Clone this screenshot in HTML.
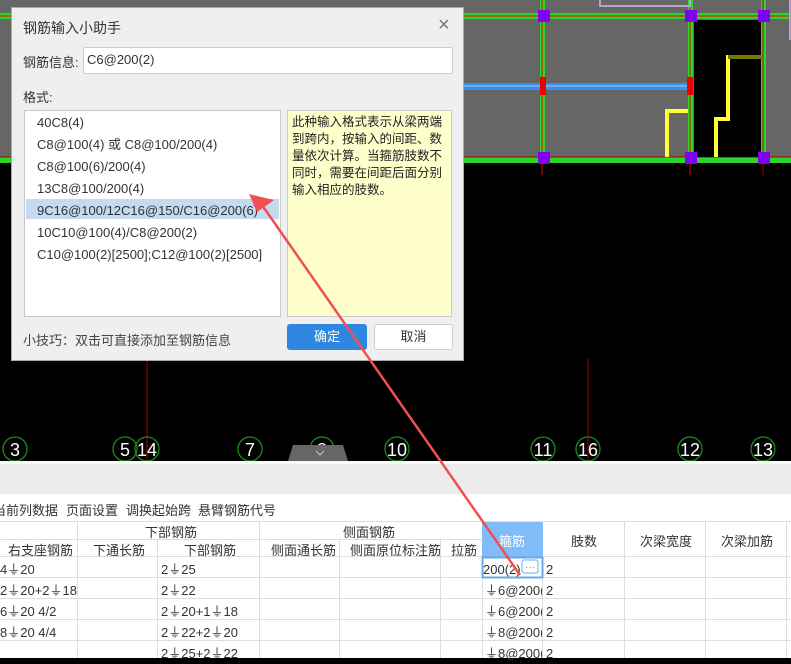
<!DOCTYPE html>
<html><head><meta charset="utf-8"><style>
*{margin:0;padding:0;box-sizing:border-box}
body{width:791px;height:658px;overflow:hidden;background:#000;position:relative;font-family:"Liberation Sans","Noto Sans CJK SC",sans-serif;font-size:13px;color:#333}
.a{position:absolute}
.t{position:absolute;white-space:nowrap}
</style></head><body>
<div class="a" style="left:0;top:0;width:791px;height:163px;background:#666"></div>
<svg class="a" style="left:0;top:0" width="791" height="461">
 <g fill="none">
  <rect x="0" y="13" width="791" height="6" fill="#2dd62d"/><line x1="0" y1="16" x2="791" y2="16" stroke="#e00" stroke-width="1"/>
  <rect x="0" y="157" width="791" height="6" fill="#2dd62d"/><line x1="0" y1="157" x2="791" y2="157" stroke="#a00"/>
  <rect x="694" y="20" width="69" height="137" fill="#000"/>
  <rect x="540" y="0" width="5" height="163" fill="#2dd62d"/><line x1="542" y1="0" x2="542" y2="175" stroke="#e00"/>
  <rect x="688" y="0" width="5" height="163" fill="#2dd62d"/><line x1="690" y1="0" x2="690" y2="175" stroke="#e00"/>
  <rect x="761" y="0" width="5" height="163" fill="#2dd62d"/><line x1="763" y1="0" x2="763" y2="175" stroke="#a00"/>
  <rect x="460" y="83" width="230" height="7" fill="#3a8ef0"/><line x1="460" y1="86" x2="690" y2="86" stroke="#9cf"/>
  <path d="M667 157V111h21" stroke="#ff3" stroke-width="4"/>
  <path d="M716 157V119h12V57h35" stroke="#ff3" stroke-width="4"/>
  <line x1="728" y1="57" x2="763" y2="57" stroke="#770" stroke-width="4"/>
  <g fill="#8000f0"><rect x="538" y="10" width="12" height="12"/><rect x="685" y="10" width="12" height="12"/><rect x="758" y="10" width="12" height="12"/><rect x="538" y="152" width="12" height="12"/><rect x="685" y="152" width="12" height="12"/><rect x="758" y="152" width="12" height="12"/></g>
  <rect x="540" y="77" width="6" height="18" fill="#e00"/><rect x="687" y="77" width="6" height="18" fill="#e00"/>
  <path d="M690 0v6h-90V0M790 0v40" stroke="#b9a0d0" stroke-width="2"/>
  <line x1="147" y1="361" x2="147" y2="461" stroke="#a00"/>
  <line x1="588" y1="358" x2="588" y2="461" stroke="#a00"/>
 </g>
 <g fill="none" stroke="#1a8a1a" stroke-width="1.3">
  <circle cx="15" cy="449" r="12"/><circle cx="125" cy="449" r="12"/><circle cx="147" cy="449" r="12"/><circle cx="250" cy="449" r="12"/><circle cx="322" cy="449" r="12"/><circle cx="397" cy="449" r="12"/><circle cx="543" cy="449" r="12"/><circle cx="588" cy="449" r="12"/><circle cx="690" cy="449" r="12"/><circle cx="763" cy="449" r="12"/>
 </g>
 <g fill="#fff" font-family="Liberation Sans" font-size="18" text-anchor="middle">
  <text x="15" y="456">3</text><text x="125" y="456">5</text><text x="147" y="456">14</text><text x="250" y="456">7</text><text x="322" y="456">8</text><text x="397" y="456">10</text><text x="543" y="456">11</text><text x="588" y="456">16</text><text x="690" y="456">12</text><text x="763" y="456">13</text>
 </g>
 <path d="M293 445h50l5 16h-60z" fill="#666"/>
 <path d="M316 451l4 4 4-4" stroke="#ccc" fill="none"/>
</svg>
<div class="a" style="left:11px;top:7px;width:453px;height:354px;background:#efefef;border:1px solid #aaa"></div>
<div class="t" style="left:23px;top:18px;font-size:14px;color:#333">钢筋输入小助手</div>
<div class="t" style="left:438px;top:14px;font-size:20px;color:#777;font-weight:300">×</div>
<div class="t" style="left:23px;top:52px">钢筋信息:</div>
<div class="a" style="left:83px;top:47px;width:370px;height:27px;background:#fff;border:1px solid #ccc;border-radius:2px"></div>
<div class="t" style="left:87px;top:52px">C6@200(2)</div>
<div class="t" style="left:23px;top:87px">格式:</div>
<div class="a" style="left:24px;top:110px;width:257px;height:207px;background:#fff;border:1px solid #c8c8c8"></div>
<div class="a" style="left:26px;top:199px;width:253px;height:20px;background:#c3daf0"></div>
<div class="t" style="left:37px;top:112px;line-height:22px;color:#333">40C8(4)<br>C8@100(4) 或 C8@100/200(4)<br>C8@100(6)/200(4)<br>13C8@100/200(4)<br>9C16@100/12C16@150/C16@200(6)<br>10C10@100(4)/C8@200(2)<br>C10@100(2)[2500];C12@100(2)[2500]</div>
<div class="a" style="left:287px;top:110px;width:165px;height:207px;background:#ffffcc;border:1px solid #ccc"></div>
<div class="t" style="left:292px;top:114px;line-height:17px;font-size:12.5px;color:#222">此种输入格式表示从梁两端<br>到跨内，按输入的间距、数<br>量依次计算。当箍筋肢数不<br>同时，需要在间距后面分别<br>输入相应的肢数。</div>
<div class="t" style="left:23px;top:330px;color:#444">小技巧：双击可直接添加至钢筋信息</div>
<div class="a" style="left:287px;top:324px;width:80px;height:26px;background:#2f87e0;border-radius:3px;color:#fff;text-align:center;line-height:26px">确定</div>
<div class="a" style="left:374px;top:324px;width:79px;height:26px;background:#fff;border:1px solid #ccc;border-radius:3px;text-align:center;line-height:24px">取消</div>
<div class="a" style="left:0;top:461px;width:791px;height:33px;background:#ececee;border-top:3px solid #fafafa"></div>
<div class="a" style="left:0;top:494px;width:791px;height:164px;background:#fff"></div>
<div class="t" style="left:-7px;top:500px;color:#333">当前列数据</div>
<div class="t" style="left:66px;top:500px;color:#333">页面设置</div>
<div class="t" style="left:126px;top:500px;color:#333">调换起始跨</div>
<div class="t" style="left:198px;top:500px;color:#333">悬臂钢筋代号</div>
<svg class="a" style="left:0;top:521px" width="791" height="137">
 <g stroke="#ddd" fill="none">
  <line x1="0" y1="0.5" x2="791" y2="0.5"/>
  <line x1="0" y1="18.5" x2="482" y2="18.5"/>
  <line x1="0" y1="35.5" x2="791" y2="35.5"/>
  <line x1="0" y1="56.5" x2="791" y2="56.5"/><line x1="0" y1="77.5" x2="791" y2="77.5"/><line x1="0" y1="98.5" x2="791" y2="98.5"/><line x1="0" y1="119.5" x2="791" y2="119.5"/>
  <path d="M77.5 0v137M157.5 18v119M259.5 0v137M339.5 18v119M440.5 18v119M482.5 0v137M542.5 0v137M624.5 0v137M705.5 0v137M786.5 0v137"/>
 </g>
 <rect x="482" y="1" width="61" height="35" fill="#80bcf8"/>
 <rect x="482.5" y="36.5" width="60" height="20" fill="#fff" stroke="#6aa8ee" stroke-width="2"/>
 <rect x="522" y="39" width="16" height="13" rx="2" fill="#fff" stroke="#6aa8ee"/>
 <text x="530" y="49" fill="#4a8ee0" font-size="10" text-anchor="middle">···</text>
</svg>
<div class="t" style="left:145px;top:522px">下部钢筋</div>
<div class="t" style="left:343px;top:522px">侧面钢筋</div>
<div class="t" style="left:8px;top:540px">右支座钢筋</div>
<div class="t" style="left:93px;top:540px">下通长筋</div>
<div class="t" style="left:184px;top:540px">下部钢筋</div>
<div class="t" style="left:271px;top:540px">侧面通长筋</div>
<div class="t" style="left:350px;top:540px">侧面原位标注筋</div>
<div class="t" style="left:451px;top:540px">拉筋</div>
<div class="t" style="left:499px;top:531px;color:#fff">箍筋</div>
<div class="t" style="left:571px;top:531px">肢数</div>
<div class="t" style="left:640px;top:531px">次梁宽度</div>
<div class="t" style="left:721px;top:531px">次梁加筋</div>
<div class="t" style="left:0;top:559px;line-height:21px">4⏚20<br>2⏚20+2⏚18<br>6⏚20 4/2<br>8⏚20 4/4</div>
<div class="t" style="left:161px;top:559px;line-height:21px">2⏚25<br>2⏚22<br>2⏚20+1⏚18<br>2⏚22+2⏚20<br>2⏚25+2⏚22</div>
<div class="t" style="left:483px;top:559px;line-height:21px;width:38px;overflow:hidden">200(2)</div>
<div class="t" style="left:485px;top:580px;line-height:21px;width:57px;overflow:hidden">⏚6@200(2)<br>⏚6@200(2)<br>⏚8@200(2)<br>⏚8@200(2)</div>
<div class="t" style="left:546px;top:559px;line-height:21px">2<br>2<br>2<br>2<br>2</div>
<svg class="a" style="left:0;top:0" width="791" height="658">
 <line x1="262" y1="205" x2="520" y2="575" stroke="#f05050" stroke-width="2.5"/>
 <path d="M249 194l25 6-17 12z" fill="#f05050"/>
</svg>
</body></html>
